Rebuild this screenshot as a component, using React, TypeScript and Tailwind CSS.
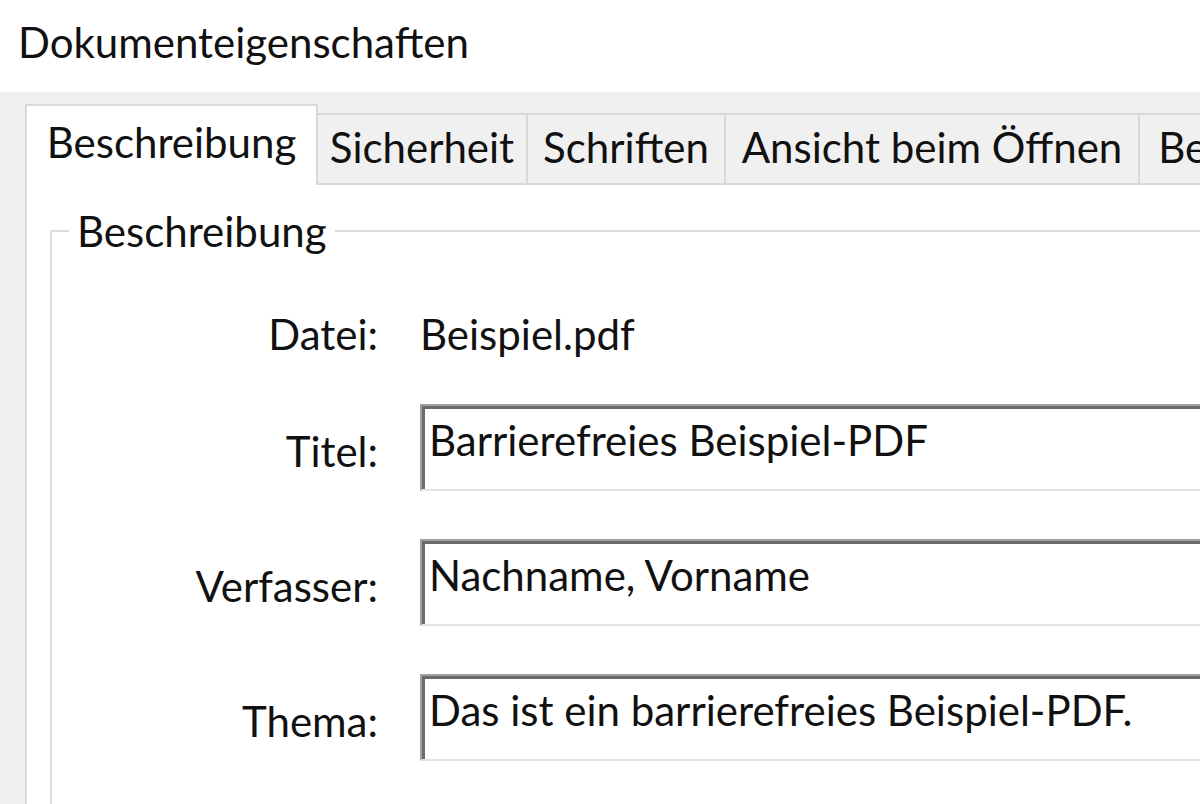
import React from "react";

const font = { fontFamily: "Lato, 'Open Sans', sans-serif" };

function Tab({ label, w, selected }: { label: string; w: string; selected?: boolean }) {
  if (selected) {
    return (
      <div
        className={`${w} h-[81px] shrink-0 bg-white border-2 border-b-0 border-[#d9d9d9] flex justify-center pt-[8px] leading-[56px] relative z-10`}
      >
        {label}
      </div>
    );
  }
  return (
    <div
      className={`${w} h-[72px] shrink-0 bg-[#f0f0f0] border-t-2 border-r-2 border-b-2 border-[#d9d9d9] flex justify-center pt-[4px] leading-[56px] whitespace-nowrap overflow-hidden`}
    >
      {label}
    </div>
  );
}

function Field({ label, value, mt }: { label: string; value: string; mt: string }) {
  return (
    <div className={`flex items-center ${mt}`}>
      <div className="w-[326px] text-right leading-[56px] pt-[6px] shrink-0">{label}</div>
      <div className="ml-[42px] w-[900px] h-[87px] shrink-0 border-t-2 border-l-2 border-[#a0a0a0] border-b-2 border-b-[#e3e3e3] shadow-[inset_3px_3px_0_#696969] bg-white pl-[7px] pt-[6px] leading-[56px] whitespace-nowrap">
        {value}
      </div>
    </div>
  );
}

export default function App() {
  return (
    <div
      className="w-[1200px] h-[804px] overflow-hidden bg-[#f0f0f0] text-[42px] text-[#111] flex flex-col"
      style={font}
    >
      <div className="h-[92px] bg-white pl-[18px] pt-[14px] leading-[56px] shrink-0">
        Dokumenteigenschaften
      </div>
      <div className="flex-1 pl-[25px] pt-[12px] flex flex-col">
        <div className="flex items-end -mb-[2px]">
          <Tab label="Beschreibung" w="w-[293px]" selected />
          <Tab label="Sicherheit" w="w-[210px]" />
          <Tab label="Schriften" w="w-[198px]" />
          <Tab label="Ansicht beim Öffnen" w="w-[414px]" />
          <Tab label="Benutzerdefiniert" w="w-[360px]" />
        </div>
        <div className="w-[1400px] flex-1 bg-white border-2 border-[#d9d9d9] pl-[23px] pt-[18px]">
          <fieldset className="w-[1300px] h-[700px] border-2 border-[#dcdcdc]">
            <legend className="ml-[17px] px-[8px] leading-[56px]">Beschreibung</legend>
            <div className="flex items-center mt-[47px]">
              <div className="w-[326px] text-right leading-[56px] shrink-0">Datei:</div>
              <div className="ml-[42px] leading-[56px]">Beispiel.pdf</div>
            </div>
            <Field label="Titel:" value="Barrierefreies Beispiel-PDF" mt="mt-[42px]" />
            <Field label="Verfasser:" value="Nachname, Vorname" mt="mt-[48px]" />
            <Field label="Thema:" value="Das ist ein barrierefreies Beispiel-PDF." mt="mt-[48px]" />
          </fieldset>
        </div>
      </div>
    </div>
  );
}
